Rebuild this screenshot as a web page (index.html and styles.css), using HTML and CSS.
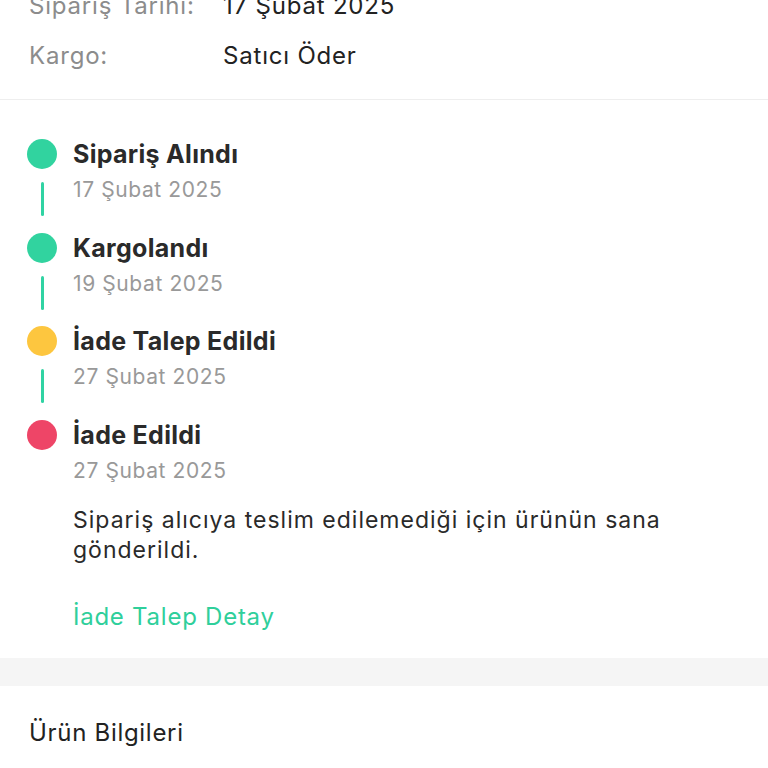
FILE: index.html
```html
<!DOCTYPE html>
<html lang="tr">
<head>
    <meta charset="UTF-8">
    <title>Sipariş Detayı</title>
    <link rel="stylesheet" href="styles.css">
</head>
<body>
<div class="info">
    <div class="info-row">
        <span class="info-label">Sipariş Tarihi:</span>
        <span class="info-value">17 Şubat 2025</span>
    </div>
    <div class="info-row">
        <span class="info-label">Kargo:</span>
        <span class="info-value">Satıcı Öder</span>
    </div>
</div>

<ul class="timeline">
    <li class="step">
        <div class="marker">
            <span class="dot green"></span>
            <span class="line"></span>
        </div>
        <div class="step-body">
            <div class="step-title">Sipariş Alındı</div>
            <div class="step-date">17 Şubat 2025</div>
        </div>
    </li>
    <li class="step">
        <div class="marker">
            <span class="dot green"></span>
            <span class="line"></span>
        </div>
        <div class="step-body">
            <div class="step-title">Kargolandı</div>
            <div class="step-date">19 Şubat 2025</div>
        </div>
    </li>
    <li class="step">
        <div class="marker">
            <span class="dot yellow"></span>
            <span class="line"></span>
        </div>
        <div class="step-body">
            <div class="step-title">İade Talep Edildi</div>
            <div class="step-date">27 Şubat 2025</div>
        </div>
    </li>
    <li class="step last">
        <div class="marker">
            <span class="dot red"></span>
        </div>
        <div class="step-body">
            <div class="step-title">İade Edildi</div>
            <div class="step-date">27 Şubat 2025</div>
            <p class="step-desc">Sipariş alıcıya teslim edilemediği için ürünün sana gönderildi.</p>
            <a class="step-link" href="#">İade Talep Detay</a>
        </div>
    </li>
</ul>

<div class="spacer"></div>

<div class="section-title">Ürün Bilgileri</div>
</body>
</html>
```

FILE: styles.css
```css
*{
    margin: 0;
    padding: 0;
    list-style: none;
    box-sizing: border-box;
}
body{
    background-color: #ffffff;
    font-family: Inter, "Liberation Sans", Arial, sans-serif;
    color: #222222;
}
.info{
    margin-top: -19px;
    padding: 0 0 18px 29px;
    border-bottom: 1px solid #eeeeee;
}
.info-row{
    display: flex;
    height: 50px;
    line-height: 50px;
    font-size: 24px;
    letter-spacing: 0.8px;
}
.info-label{
    width: 194px;
    color: #8c8c8c;
}
.info-value{
    color: #222222;
}
.timeline{
    padding: 39px 0 0 27px;
}
.step{
    display: flex;
    gap: 16px;
    height: 93.5px;
}
.step.last{
    height: auto;
    padding-bottom: 26px;
}
.marker{
    width: 30px;
    display: flex;
    flex-direction: column;
    align-items: center;
}
.dot{
    width: 30px;
    height: 30px;
    border-radius: 50%;
}
.dot.green{
    background-color: #31d39f;
}
.dot.yellow{
    background-color: #fdc63f;
}
.dot.red{
    background-color: #ee4567;
}
.line{
    width: 3px;
    height: 34px;
    margin-top: 13px;
    border-radius: 2px;
    background-color: #30d3a3;
}
.step-title{
    height: 30px;
    font-size: 25px;
    font-weight: 700;
    line-height: 30px;
    letter-spacing: 0.3px;
    color: #2a2a2a;
}
.step-date{
    height: 30px;
    margin-top: 6px;
    font-size: 21px;
    line-height: 30px;
    letter-spacing: 0.6px;
    color: #999999;
}
.step-desc{
    margin-top: 19px;
    font-size: 23px;
    line-height: 30px;
    letter-spacing: 1px;
    color: #2a2a2a;
    max-width: 660px;
}
.step-link{
    display: block;
    height: 30px;
    margin-top: 37px;
    font-size: 24px;
    line-height: 30px;
    letter-spacing: 0.75px;
    color: #2fcf9b;
    text-decoration: none;
}
.spacer{
    height: 28px;
    background-color: #f5f5f5;
}
.section-title{
    padding: 32px 0 0 29px;
    font-size: 24px;
    line-height: 30px;
    letter-spacing: 0.7px;
    color: #222222;
}
```
